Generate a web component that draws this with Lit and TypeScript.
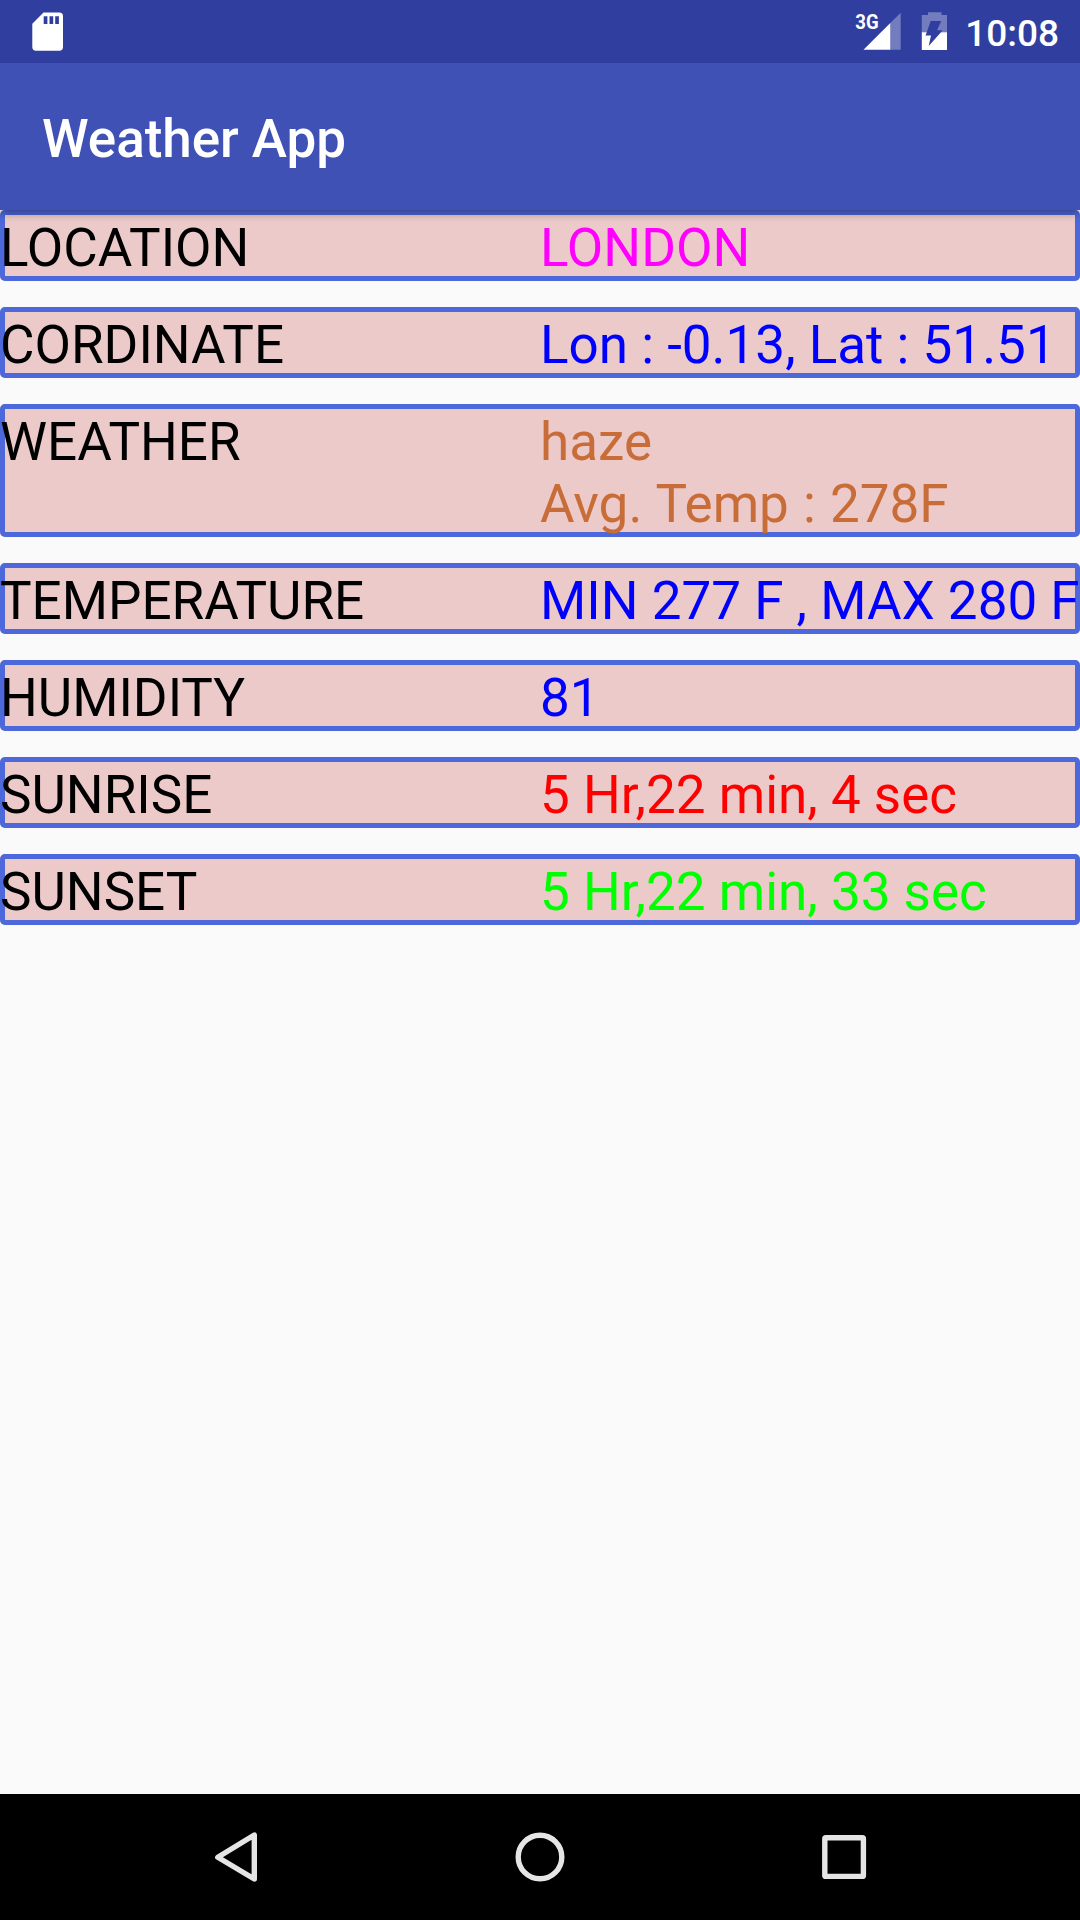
import { LitElement, html, css } from "lit";
import { customElement, property } from "lit/decorators.js";
import { classMap } from "lit/directives/class-map.js";

type Tone = "magenta" | "blue" | "brown" | "red" | "green";

interface Reading {
  label: string;
  lines: string[];
  tone: Tone;
}

const READINGS: Reading[] = [
  { label: "LOCATION", lines: ["LONDON"], tone: "magenta" },
  { label: "CORDINATE", lines: ["Lon : -0.13, Lat : 51.51"], tone: "blue" },
  { label: "WEATHER", lines: ["haze", "Avg. Temp : 278F"], tone: "brown" },
  { label: "TEMPERATURE", lines: ["MIN 277 F , MAX 280 F"], tone: "blue" },
  { label: "HUMIDITY", lines: ["81"], tone: "blue" },
  { label: "SUNRISE", lines: ["5 Hr,22 min, 4 sec"], tone: "red" },
  { label: "SUNSET", lines: ["5 Hr,22 min, 33 sec"], tone: "green" },
];

@customElement("status-bar")
export class StatusBar extends LitElement {
  static styles = css`
    :host {
      position: relative;
      z-index: 2;
      display: flex;
      align-items: center;
      justify-content: space-between;
      height: 63px;
      padding: 0 21px 0 21px;
      box-sizing: border-box;
      background: #303f9f;
      color: #fff;
    }
    .icon {
      display: block;
      flex: none;
    }
    .tray {
      display: flex;
      align-items: center;
    }
    .signal {
      margin-right: 10px;
    }
    .clock {
      margin-top: 4px;
      margin-left: 5px;
      font-size: 37px;
      font-weight: 500;
      line-height: 43px;
      white-space: nowrap;
    }
  `;

  render() {
    return html`
      <svg class="icon" width="52" height="63" viewBox="21 0 52 63">
        <path
          fill="#fff"
          fill-rule="evenodd"
          d="M43.5 12.5H59.3a3.7 3.7 0 0 1 3.7 3.7V47a3.7 3.7 0 0 1-3.7 3.7H36a3.7 3.7 0 0 1-3.7-3.7V23.7ZM43.7 16.3V24H47.4V16.3ZM49.5 16.3V24H53.2V16.3ZM55.2 16.3V24H58.9V16.3Z"
        />
      </svg>
      <div class="tray">
        <svg class="icon signal" width="50" height="63" viewBox="854 0 50 63">
          <path fill="#fff" fill-opacity=".32" d="M890.3 23.1 900.7 12.7V49.7H890.3Z" />
          <path fill="#fff" d="M863.5 49.7 890.3 23V49.7Z" />
          <text
            x="855.3"
            y="29"
            fill="#fff"
            font-size="21"
            font-weight="700"
            textLength="23.3"
            lengthAdjust="spacingAndGlyphs"
          >3G</text>
        </svg>
        <svg class="icon" width="46" height="63" viewBox="914 0 46 63">
          <path
            fill="#fff"
            fill-opacity=".32"
            d="M928 12.3H941.5V15H947V32.2H941L942.5 30.3H937L941.3 21H930.7L926.8 32.2H921.8V15H928Z"
          />
          <path fill="#fff" d="M921.8 32.2H926.8L925.5 35.5H931L928.7 46 941 32.2H947V50H921.8Z" />
        </svg>
        <span class="clock">10:08</span>
      </div>
    `;
  }
}

@customElement("reading-row")
export class ReadingRow extends LitElement {
  @property() label = "";
  @property({ attribute: false }) lines: string[] = [];
  @property() tone: Tone = "blue";

  static styles = css`
    :host {
      display: block;
    }
    .card {
      display: grid;
      grid-template-columns: 1fr 1fr;
      padding: 7px 0 2px;
      border-radius: 5px;
      background: #eccaca;
      box-shadow: inset 0 0 0 5px #4d68da;
      font-size: 53px;
      line-height: 62px;
      white-space: nowrap;
      overflow: hidden;
    }
    .label {
      color: #000;
    }
    .line {
      display: block;
    }
    .magenta {
      color: #ff00ff;
    }
    .blue {
      color: #0000ff;
    }
    .brown {
      color: #c96d38;
      word-spacing: 1px;
    }
    .red {
      color: #ff0000;
    }
    .green {
      color: #00ff00;
    }
  `;

  render() {
    return html`
      <div class="card">
        <div class="label">${this.label}</div>
        <div class=${classMap({ value: true, [this.tone]: true })}>
          ${this.lines.map((line) => html`<span class="line">${line}</span>`)}
        </div>
      </div>
    `;
  }
}

@customElement("nav-bar")
export class NavBar extends LitElement {
  static styles = css`
    :host {
      display: flex;
      justify-content: center;
      height: 126px;
      background: #000;
    }
    .button {
      display: flex;
      align-items: center;
      justify-content: center;
      width: 304px;
    }
    .icon {
      display: block;
      fill: none;
      stroke: #e5e5e5;
      stroke-width: 5.4;
      stroke-linejoin: round;
    }
  `;

  render() {
    return html`
      <div class="button">
        <svg class="icon" width="64" height="64" viewBox="-32 -32 64 64">
          <path d="M-18.2 .3 18.3-22V22Z" />
        </svg>
      </div>
      <div class="button">
        <svg class="icon" width="64" height="64" viewBox="-32 -32 64 64">
          <circle r="21.8" />
        </svg>
      </div>
      <div class="button">
        <svg class="icon" width="64" height="64" viewBox="-32 -32 64 64">
          <rect x="-19.2" y="-19.2" width="38.6" height="38.6" rx="1" />
        </svg>
      </div>
    `;
  }
}

@customElement("app-root")
export class AppRoot extends LitElement {
  static styles = css`
    :host {
      display: flex;
      flex-direction: column;
      width: 1080px;
      height: 1920px;
      overflow: hidden;
      background: #fafafa;
      font-family: Roboto, "Liberation Sans", sans-serif;
    }
    .appbar {
      position: relative;
      z-index: 1;
      display: flex;
      align-items: flex-start;
      box-sizing: border-box;
      height: 147px;
      padding: 45px 42px 0;
      background: #3f51b5;
      box-shadow: 0 3px 9px rgba(0, 0, 0, 0.4);
    }
    .title {
      margin: 0;
      color: #fff;
      font-size: 53px;
      font-weight: 500;
      letter-spacing: -0.05px;
      line-height: 62px;
    }
    .readings {
      display: flex;
      flex: 1;
      flex-direction: column;
      gap: 26px;
    }
  `;

  render() {
    return html`
      <status-bar></status-bar>
      <header class="appbar"><h1 class="title">Weather App</h1></header>
      <main class="readings">
        ${READINGS.map(
          (r) => html`<reading-row .label=${r.label} .lines=${r.lines} .tone=${r.tone}></reading-row>`
        )}
      </main>
      <nav-bar></nav-bar>
    `;
  }
}
